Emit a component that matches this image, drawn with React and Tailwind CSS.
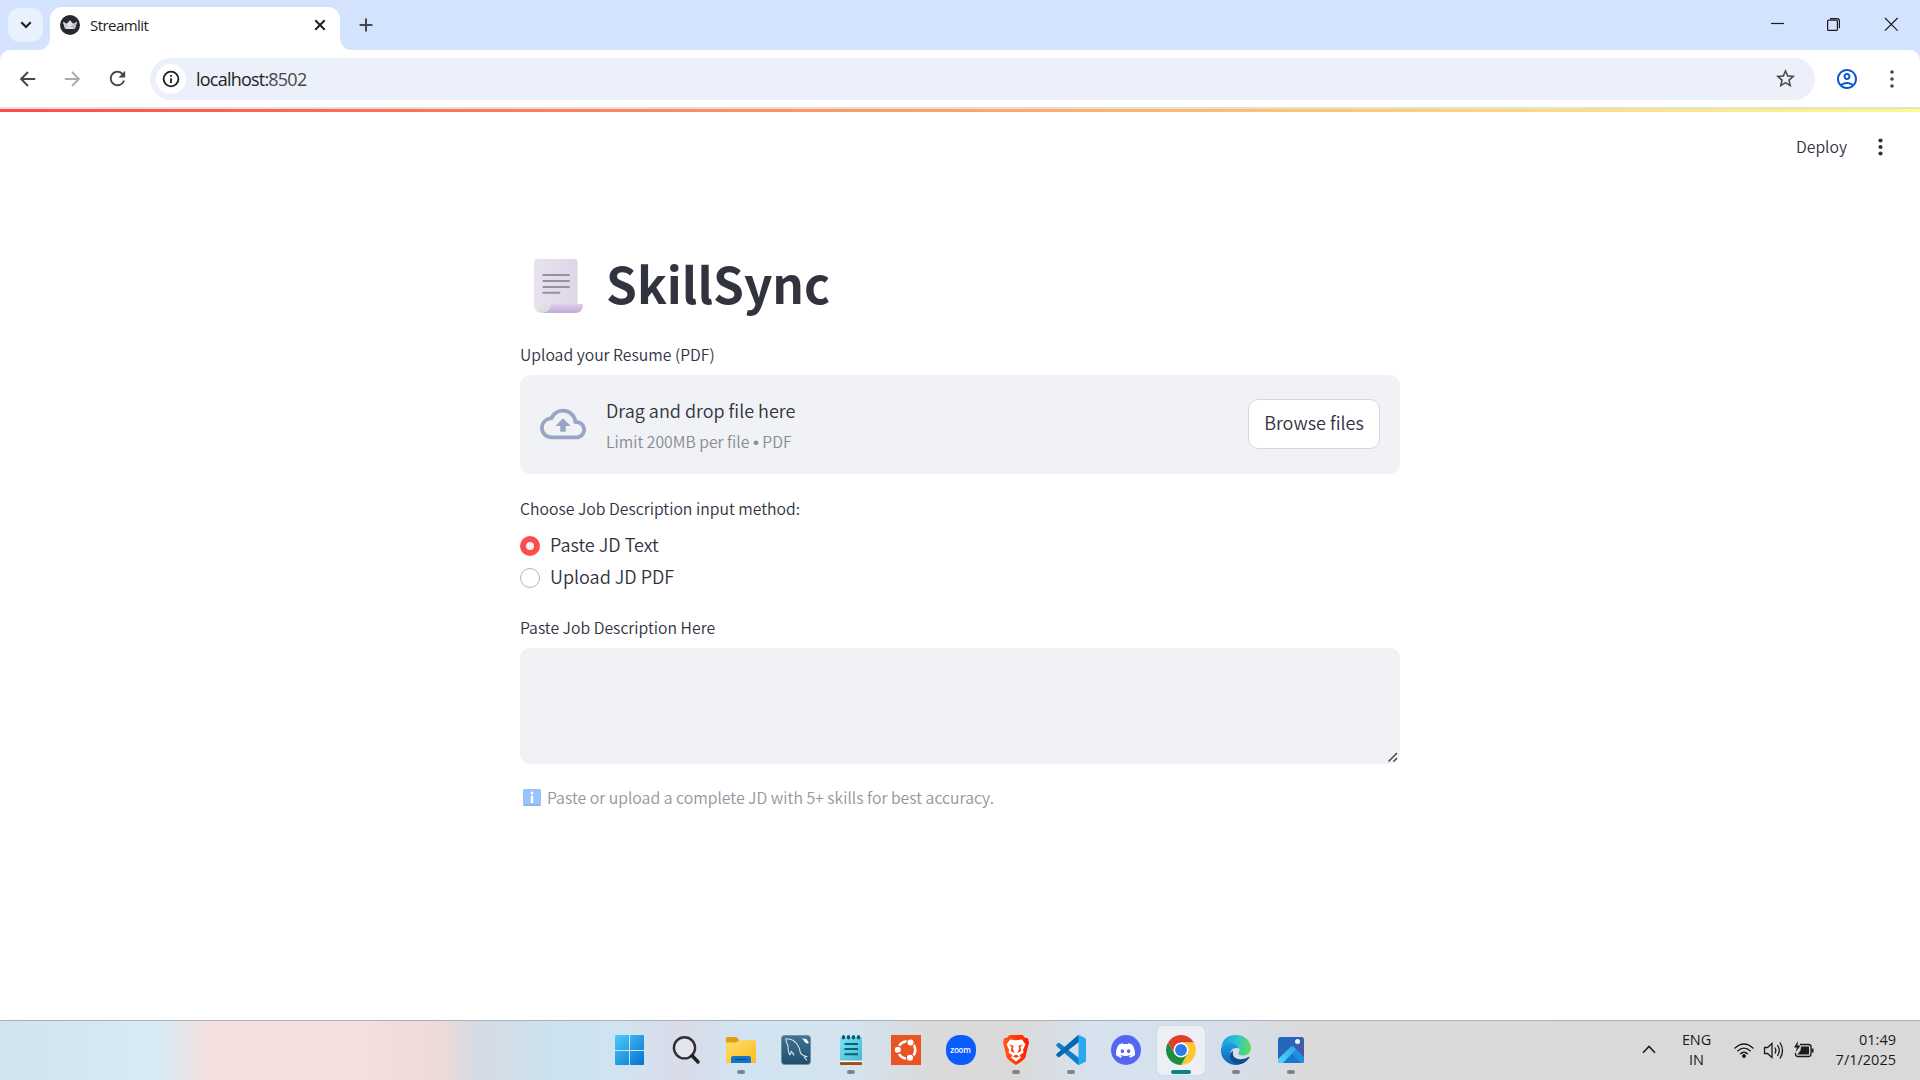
import React from "react";
import { MdOutlineCloudUpload, MdOutlineAccountCircle, MdStarOutline, MdRefresh } from "react-icons/md";
import { SiDiscord } from "react-icons/si";

const SEGOE = "font-['Open_Sans','Noto_Sans',sans-serif]";
const SOURCE = "font-['Noto_Sans_CJK_SC','Noto_Sans',sans-serif]";

function StreamlitFavicon() {
  return (
    <svg width="20" height="20" viewBox="0 0 20 20">
      <circle cx="10" cy="10" r="10" fill="#262730" />
      <path d="M3 6.800 6.800 8.700 10 5.200 13.200 8.700 17 6.800 15 13.400Q10 14.800 5 13.400Z" fill="#e4e4e6" />
      <path d="M3 6.800 10 11.500 6 13.600 5 13.400Z" fill="#cfcfd3" />
      <path d="M17 6.800 10 11.500 14 13.600 15 13.400Z" fill="#bdbdc2" />
    </svg>
  );
}

function TabStrip() {
  return (
    <div className="flex h-[50px] bg-[#d3e3fd]">
      <div className="ml-2 mt-2 flex h-[34px] w-[35px] items-center justify-center rounded-xl bg-[#e9f1fe]">
        <svg width="12" height="8" viewBox="0 0 12 8" fill="none" stroke="#1f1f1f" strokeWidth="2.2">
          <path d="M1.3 1.3 6 6 10.7 1.3" />
        </svg>
      </div>
      <svg className="mt-[38px] ml-[-5px]" width="12" height="12" viewBox="0 0 12 12">
        <path d="M12 0V12H0A12 12 0 0 0 12 0Z" fill="#fff" />
      </svg>
      <div className="mt-[7px] flex h-[43px] w-[290px] items-center rounded-t-xl bg-white pl-[10px] pr-[13px] pb-[7px]">
        <StreamlitFavicon />
        <span className="ml-[10px] flex-1 text-[15px] leading-5 tracking-[-0.55px] text-[#1f1f1f]">Streamlit</span>
        <svg width="14" height="14" viewBox="0 0 14 14" fill="none" stroke="#1f1f1f" strokeWidth="2">
          <path d="M2.3 2.3 11.7 11.7M11.7 2.3 2.3 11.7" />
        </svg>
      </div>
      <svg className="mt-[38px]" width="12" height="12" viewBox="0 0 12 12">
        <path d="M0 0V12H12A12 12 0 0 1 0 0Z" fill="#fff" />
      </svg>
      <svg className="ml-[7px] mt-[18px]" width="14" height="14" viewBox="0 0 14 14" stroke="#474747" strokeWidth="2">
        <path d="M.6 7H13.4M7 .6V13.4" />
      </svg>
      <div className="ml-auto flex pt-[17px]">
        <svg width="150" height="16" viewBox="0 0 150 16" fill="none" stroke="#1b1b1b" strokeWidth="1.2">
          <path d="M1 6.5H14" />
          <path d="M57.6 4.1Q57.6 3.1 58.6 3.1H66.4Q67.4 3.1 67.4 4.1V12.4Q67.4 13.4 66.4 13.4H58.6Q57.6 13.4 57.6 12.4Z" />
          <path d="M60 1.6H67.2Q69.4 1.6 69.4 3.8V11.3" />
          <path d="M115 1 127.6 13.6M127.6 1 115 13.6" />
        </svg>
      </div>
    </div>
  );
}

function Toolbar() {
  return (
    <div className="flex bg-[#d3e3fd]">
      <div className="flex h-[57px] flex-1 items-center rounded-t-[10px] bg-white">
        <svg className="ml-[20px]" width="16" height="16" viewBox="0 0 16 16" fill="none" stroke="#474747" strokeWidth="1.9">
          <path d="M8 1 1.2 8 8 15M1.2 8H15.2" />
        </svg>
        <svg className="ml-[28px]" width="16" height="16" viewBox="0 0 16 16" fill="none" stroke="#ababab" strokeWidth="1.9">
          <path d="M8 1 14.8 8 8 15M14.8 8H.8" />
        </svg>
        <MdRefresh className="ml-[26px]" size="23" color="#474747" />
        <div className="ml-[21px] flex h-[42px] w-[1665px] items-center rounded-full bg-[#ecf0fa] pl-[6px] pr-[18px]">
          <span className="flex h-[30px] w-[30px] items-center justify-center rounded-full bg-white">
            <svg width="18" height="18" viewBox="0 0 18 18" fill="none" stroke="#1f1f1f" strokeWidth="1.8">
              <circle cx="9" cy="9" r="7.4" />
              <path d="M9 8.2V13M9 5V6.7" />
            </svg>
          </span>
          <span className="ml-[10px] flex-1 pt-px text-[18px] leading-6 tracking-[-0.780px] text-[#1f1f1f]">localhost:<span className="text-[#474747]">8502</span></span>
          <MdStarOutline size="23" color="#474747" />
        </div>
        <MdOutlineAccountCircle className="ml-[20px]" size="24" color="#0b57d0" />
        <svg className="ml-[31px]" width="4" height="18" viewBox="0 0 4 18" fill="#474747">
          <circle cx="2" cy="2" r="1.8" />
          <circle cx="2" cy="9" r="1.8" />
          <circle cx="2" cy="16" r="1.8" />
        </svg>
      </div>
    </div>
  );
}

function ScrollEmoji() {
  return (
    <svg className="mt-[7px]" width="50" height="55" viewBox="0 0 50 55">
      <defs>
        <linearGradient id="paper" x1="0" y1="0" x2="1" y2="0">
          <stop offset="0" stopColor="#e9e2f0" />
          <stop offset="1" stopColor="#dcd6e6" />
        </linearGradient>
        <linearGradient id="roll" x1="0" y1="0" x2="0" y2="1">
          <stop offset="0" stopColor="#decfe9" />
          <stop offset="1" stopColor="#c2a9da" />
        </linearGradient>
        <linearGradient id="curl" x1="0" y1="0" x2="1" y2="1">
          <stop offset="0" stopColor="#eceaf0" />
          <stop offset="1" stopColor="#d5d2da" />
        </linearGradient>
      </defs>
      <path d="M0 2Q0 0 2 0H41Q43.500 0 43.500 2V48H0Z" fill="url(#paper)" />
      <path d="M17 45H49Q49 54 41 54H8Q17 52 17 45Z" fill="url(#roll)" />
      <path d="M0 44V46.500Q1 54 8 54 16 53 17 45.500 14 47.500 11 45.500 6 43.500 0 46Z" fill="url(#curl)" />
      <path d="M9.300 16H35M9.300 22H35M9.300 28H35M9.300 33.700H25.500" stroke="#988f9f" strokeWidth="1.900" strokeLinecap="round" />
    </svg>
  );
}

function Radio({ label, checked }) {
  return (
    <div className="flex h-8 items-center">
      {checked ? (
        <span className="flex h-5 w-5 items-center justify-center rounded-full bg-[#ff4b4b]">
          <span className="h-2 w-2 rounded-full bg-[#f0f2f6]" />
        </span>
      ) : (
        <span className="h-5 w-5 rounded-full border border-[#b3b4b8] bg-white" />
      )}
      <span className="mb-[4px] ml-[10px] text-[18.050px] leading-8">{label}</span>
    </div>
  );
}

function Page() {
  return (
    <div className={`h-[908px] bg-white font-[350] text-[#31333f] ${SOURCE}`}>
      <div className="flex h-[70px] items-center justify-end pr-[37px]">
        <span className="text-[15.780px] leading-6">Deploy</span>
        <svg className="ml-[31px]" width="5" height="18" viewBox="0 0 5 18" fill="#31333f">
          <circle cx="2.500" cy="2.500" r="2.100" />
          <circle cx="2.500" cy="9" r="2.100" />
          <circle cx="2.500" cy="15.500" r="2.100" />
        </svg>
      </div>
      <main className="mx-auto w-[880px] pt-[68px]">
        <div className="flex h-[66px] items-center pl-[14px]">
          <ScrollEmoji />
          <h1 className="ml-[22px] text-[49.500px] font-bold leading-[66px]">SkillSync</h1>
        </div>
        <div className="mt-[27px] text-[15.780px] leading-6">Upload your Resume (PDF)</div>
        <div className="mt-[8px] flex h-[99px] items-center rounded-[10px] bg-[#f0f2f6] px-5">
          <MdOutlineCloudUpload className="mb-[2px]" size="46" color="#97a6c3" />
          <div className="ml-[20px] flex-1 pt-[2px]">
            <div className="text-[18.050px] leading-8">Drag and drop file here</div>
            <div className="text-[15.780px] leading-8 text-[#898b93]">
              Limit 200MB per file <span className="font-['Liberation_Sans'] text-[17px] leading-none">•</span> PDF
            </div>
          </div>
          <button className="mb-[2px] h-[50px] w-[132px] rounded-[10px] border border-[#d5d6db] bg-white pb-[3px] text-[18.050px] leading-8">Browse files</button>
        </div>
        <div className="mt-[23px] text-[15.780px] leading-6">Choose Job Description input method:</div>
        <div className="mt-[9px]">
          <Radio label="Paste JD Text" checked />
          <Radio label="Upload JD PDF" />
        </div>
        <div className="mt-[22px] text-[15.780px] leading-6">Paste Job Description Here</div>
        <div className="mt-[8px] flex h-[116px] items-end justify-end rounded-[10px] bg-[#f0f2f6] p-[2px]">
          <svg width="10" height="10" viewBox="0 0 10 10" stroke="#474750" strokeWidth="1.500">
            <path d="M.5 9.500 9 1M5.500 9.500 9 6" />
          </svg>
        </div>
        <div className="mt-[22px] flex items-center pl-[3px] text-[15.810px] leading-6 text-[#94959c]">
          <svg className="mb-px" width="18" height="17" viewBox="0 0 18 17">
            <rect width="18" height="17" rx="1.500" fill="#98c3f8" />
            <rect x=".5" y="15.500" width="17" height="1.500" rx=".7" fill="#8ab0ea" />
            <path d="M9 6.500V14" stroke="#fff" strokeWidth="2.400" />
            <circle cx="9" cy="4" r="1.400" fill="#fff" />
          </svg>
          <span className="ml-[6px]">Paste or upload a complete JD with 5+ skills for best accuracy.</span>
        </div>
      </main>
    </div>
  );
}

function WindowsIcon() {
  return (
    <svg className="mr-[2px]" width="30" height="30" viewBox="0 0 30 30">
      <defs>
        <linearGradient id="win" gradientUnits="userSpaceOnUse" x1="0" y1="0" x2="29" y2="30">
          <stop offset="0" stopColor="#4ccbfb" />
          <stop offset="1" stopColor="#0470ce" />
        </linearGradient>
      </defs>
      <path d="M1 0H14V15H0V1Q0 0 1 0ZM15 0H28Q29 0 29 1V15H15ZM0 16H14V30H1Q0 30 0 29ZM15 16H29V29Q29 30 28 30H15Z" fill="url(#win)" />
    </svg>
  );
}

function SearchIcon() {
  return (
    <svg width="30" height="30" viewBox="0 0 30 30" fill="none">
      <circle cx="13.500" cy="12.800" r="10.600" stroke="#303030" strokeWidth="2.400" fill="#fff" fillOpacity=".25" />
      <path d="M21 20.500 27 27" stroke="#202020" strokeWidth="3.400" strokeLinecap="round" />
    </svg>
  );
}

function FolderIcon() {
  return (
    <svg width="30" height="30" viewBox="0 0 30 30">
      <defs>
        <linearGradient id="fold" x1="0" y1="0" x2="1" y2="1">
          <stop offset="0" stopColor="#ffdc6a" />
          <stop offset="1" stopColor="#fbbd1f" />
        </linearGradient>
      </defs>
      <path d="M0 3Q0 2 1 2H10Q11 2 12 3.500L14 6V12H0Z" fill="#dea00d" />
      <path d="M0 7.500H10L13 5.300H29Q30 5.300 30 6.300V28H0Z" fill="url(#fold)" />
      <path d="M5 28V23Q5 21 7 21H23Q25 21 25 23V28Z" fill="#1576c8" />
      <path d="M9 24.500H21.500" stroke="#0b4a88" strokeWidth="1.200" />
    </svg>
  );
}

function WorkbenchIcon() {
  return (
    <svg width="30" height="30" viewBox="0 0 30 30">
      <defs>
        <linearGradient id="wb" x1="0" y1="0" x2="0" y2="1">
          <stop offset="0" stopColor="#3f7295" />
          <stop offset="1" stopColor="#1f4f6d" />
        </linearGradient>
      </defs>
      <rect x=".5" y=".5" width="29" height="29" rx="3" fill="url(#wb)" stroke="#6e93a8" />
      <path d="M5 5Q4 3.500 6 3.800 12 4 16 9 19 13 19.500 18 21 20.500 25.500 21.500L23.500 22.500 26 25.500M5 5Q5.500 8 7 10.500 6.500 15 8.500 19.500 9.500 20 10.200 16.500 13 19 12.700 20.500" fill="none" stroke="#dbe7ee" strokeWidth="1.100" />
      <path d="M20.500 2.500 23 4 25 3.500 28 8 25.500 8.500 23.500 6.500Z" fill="#fff" />
    </svg>
  );
}

function NotepadIcon() {
  return (
    <svg width="30" height="30" viewBox="0 0 30 30">
      <defs>
        <linearGradient id="np" x1="0" y1="0" x2="1" y2="1">
          <stop offset="0" stopColor="#7fe3f3" />
          <stop offset="1" stopColor="#42b8d3" />
        </linearGradient>
      </defs>
      <rect x="4" y="26.500" width="22" height="3.500" rx="1" fill="#a04f14" />
      <rect x="4" y="25.300" width="22" height="1.800" fill="#fff" />
      <path d="M4 3.500Q4 2 5.500 2H24.500Q26 2 26 3.500V25.500H4Z" fill="url(#np)" />
      <path d="M8.500 9H22M8.500 14H22M8.500 19.200H22" stroke="#0a6076" strokeWidth="1.900" />
      <g fill="#0d5c75">
        <ellipse cx="7.500" cy="2.200" rx="1.700" ry="2.200" />
        <ellipse cx="12.500" cy="2.200" rx="1.700" ry="2.200" />
        <ellipse cx="17.500" cy="2.200" rx="1.700" ry="2.200" />
        <ellipse cx="22.500" cy="2.200" rx="1.700" ry="2.200" />
      </g>
    </svg>
  );
}

function UbuntuIcon() {
  return (
    <svg width="30" height="30" viewBox="0 0 30 30">
      <rect width="30" height="30" fill="#e95420" />
      <circle cx="15.700" cy="15" r="8.600" fill="none" stroke="#fff" strokeWidth="2.600" />
      <g fill="#fff" stroke="#e95420" strokeWidth="1.300">
        <circle cx="6.800" cy="14.800" r="3.700" />
        <circle cx="19.500" cy="7.500" r="3.700" />
        <circle cx="19" cy="22.800" r="3.700" />
      </g>
    </svg>
  );
}

function ZoomIcon() {
  return (
    <span className="flex h-[30px] w-[30px] items-center justify-center rounded-[14px] bg-[#0b5cff] pb-px text-[8px] font-semibold leading-none tracking-[-0.200px] text-white">
      zoom
    </span>
  );
}

function BraveIcon() {
  return (
    <svg width="30" height="30" viewBox="0 0 30 30">
      <defs>
        <linearGradient id="brv" x1="0" y1="0" x2="1" y2="0">
          <stop offset="0" stopColor="#ff5a14" />
          <stop offset="1" stopColor="#fb1c08" />
        </linearGradient>
      </defs>
      <path d="M8.500 0H21.500L24 2.800 27 3.300 28 8 27.300 10 24.500 22Q23.500 25 15 30 6.500 25 5.500 22L2.700 10 2 8 3 3.300 6 2.800Z" fill="url(#brv)" />
      <path d="M9 4.500 15 5.300 21 4.500 24.500 9.500 22 14.500 22.500 17.500 18.500 20.500 20 22.500 15 26.500 10 22.500 11.500 20.500 7.500 17.500 8 14.500 5.500 9.500Z" fill="#fff" />
      <path d="M8.500 9.500 12.500 10.700 11.800 14 13.800 18 10.500 16.500 9.800 15 10.800 12.500ZM21.500 9.500 17.500 10.700 18.200 14 16.200 18 19.500 16.500 20.200 15 19.200 12.500ZM11.500 21.300 15 19.700 18.500 21.300 15 22.800Z" fill="#fb3a0e" />
    </svg>
  );
}

function VsCodeIcon() {
  return (
    <svg width="30" height="30" viewBox="0 0 30 30">
      <path d="M.4 9.500 2 8Q2.800 7.500 3.500 8L23 23V30L21.500 29.500.4 11Q0 10.300.4 9.500Z" fill="#0f7fcb" />
      <path d="M.4 20.500 2 22Q2.800 22.500 3.500 22L23 7V0L21.500 .5 .4 19Q0 19.700.4 20.500Z" fill="#0669ad" />
      <path d="M21.500 .3 23 0 29 2.900Q30 3.500 30 4.500V25.500Q30 26.500 29 27.100L23 30 21.500 29.600Q22.500 29.300 22.500 28V2Q22.500.8 21.500 .3Z" fill="#2aa8f0" />
    </svg>
  );
}

function DiscordIcon() {
  return (
    <span className="flex h-[30px] w-[30px] items-center justify-center rounded-full bg-[#5865f2]">
      <SiDiscord size="19" color="#fff" />
    </span>
  );
}

function ChromeIcon() {
  return (
    <svg width="30" height="30" viewBox="0 0 48 48">
      <path d="M24 12H44.780A24 24 0 0 0 3.220 12L13.610 30Z" fill="#e33b2e" />
      <path d="M34.390 30 24 48A24 24 0 0 0 44.780 12H24Z" fill="#fcc934" />
      <path d="M13.610 30 3.220 12A24 24 0 0 0 24 48L34.390 30Z" fill="#1e8e3e" />
      <circle cx="24" cy="24" r="12" fill="#fff" />
      <circle cx="24" cy="24" r="9.500" fill="#2a7bea" />
    </svg>
  );
}

function EdgeIcon() {
  return (
    <svg width="30" height="30" viewBox="0 0 30 30">
      <defs>
        <linearGradient id="edgeTop" x1="0" y1=".4" x2="1" y2=".5">
          <stop offset="0" stopColor="#1b9de2" />
          <stop offset=".5" stopColor="#2fc2d0" />
          <stop offset="1" stopColor="#62e052" />
        </linearGradient>
        <linearGradient id="edgeLeft" x1="0" y1="0" x2="0" y2="1">
          <stop offset="0" stopColor="#1ba0e6" />
          <stop offset="1" stopColor="#1160ae" />
        </linearGradient>
      </defs>
      <path d="M.2 13Q2 0 15 0C24 0 30 6.500 30 13 30 18 26 20.500 22 20.500 18.500 20.500 17 19 17.500 18 19 16 18.500 14 17.500 12.500 13 6 3 7.500.2 13Z" fill="url(#edgeTop)" />
      <path d="M.1 13.500C2.500 8 9 6.500 13.500 9 16.500 10.700 17.500 12.500 17.800 13.500 10 11 7.500 19 11 24 13.500 28 17.500 29.500 19.500 29.300 9 32.500-1.500 24 .1 13.500Z" fill="url(#edgeLeft)" />
      <path d="M12.200 15.500C10 24 19 26.500 27.500 22 28.300 21.600 28.800 22.200 28.200 23 24 29 18 30.500 14 28.300 7.500 25 7.500 18.500 12.200 15.500Z" fill="#0d4f90" />
    </svg>
  );
}

function PhotosIcon() {
  return (
    <svg width="30" height="30" viewBox="0 0 30 30">
      <defs>
        <linearGradient id="phBg" x1="0" y1="0" x2="1" y2="1">
          <stop offset="0" stopColor="#136fc4" />
          <stop offset=".5" stopColor="#3461b2" />
          <stop offset="1" stopColor="#5b4aa0" />
        </linearGradient>
        <linearGradient id="phHill" x1="0" y1="1" x2="1" y2="0">
          <stop offset="0" stopColor="#55dcfa" />
          <stop offset="1" stopColor="#2ba7e8" />
        </linearGradient>
        <clipPath id="phClip"><rect x="2" y="2" width="26" height="26" rx="2.500" /></clipPath>
      </defs>
      <g clipPath="url(#phClip)">
        <rect x="2" y="2" width="26" height="26" fill="url(#phBg)" />
        <path d="M4 28 16 15 29 28Z" fill="#1877cf" />
        <path d="M15 12Q16.500 10.500 18 12L30 24V30H27L14 17Z" fill="#1e8fdc" />
        <path d="M0 26 14.500 12Q16.500 10.300 18.500 12.500L20 14.500 6 29H0Z" fill="url(#phHill)" />
      </g>
      <circle cx="21.500" cy="6.500" r="2.500" fill="#eef3fb" />
    </svg>
  );
}

const apps = [
  { name: "start", Icon: WindowsIcon },
  { name: "search", Icon: SearchIcon },
  { name: "explorer", Icon: FolderIcon, open: true },
  { name: "workbench", Icon: WorkbenchIcon },
  { name: "notepad", Icon: NotepadIcon, open: true },
  { name: "ubuntu", Icon: UbuntuIcon },
  { name: "zoom", Icon: ZoomIcon },
  { name: "brave", Icon: BraveIcon, open: true },
  { name: "vscode", Icon: VsCodeIcon, open: true },
  { name: "discord", Icon: DiscordIcon },
  { name: "chrome", Icon: ChromeIcon, active: true },
  { name: "edge", Icon: EdgeIcon, open: true },
  { name: "photos", Icon: PhotosIcon, open: true },
];

function Taskbar() {
  return (
    <div className="flex h-[60px] justify-between border-t border-[#acb0b5] bg-[linear-gradient(90deg,#cfe4ef_0px,#d3e8f1_90px,#daebf4_162px,#e5e4e8_182px,#f4e1e0_210px,#f3dfde_370px,#ecdad8_445px,#d5dbe4_475px,#cbe3f0_560px,#d2e3f0_630px,#dadbe8_680px,#d2e4f1_735px,#d3e4f0_850px,#dadada_930px,#dadada_1020px,#d6e2ee_1090px,#d6e1ee_1180px,#d8dde4_1270px,#dadada_1310px,#d9d9d9_1920px)]">
      <div className="flex pl-[603px]">
        {apps.map(({ name, Icon, open, active }) => (
          <div key={name} className="flex w-[55px] justify-center pt-[5px]">
            <div className={active ? "flex h-[49px] w-[48px] flex-col items-center rounded-[5px] bg-[#eceff4] pt-[9px] shadow-[0_0_1px_#9aa]" : "flex h-[49px] w-[48px] flex-col items-center pt-[9px]"}>
              <Icon />
              {open && <span className="mt-[5px] h-1 w-2 rounded-full bg-[#7f8387]" />}
              {active && <span className="mt-[5px] h-1 w-5 rounded-full bg-[#0b8488]" />}
            </div>
          </div>
        ))}
      </div>
      <div className="flex items-center pb-[2px] pr-[24px] text-[14.500px] leading-5 text-[#1b1b1b]">
        <svg width="14" height="9" viewBox="0 0 14 9" fill="none" stroke="#1b1b1b" strokeWidth="1.600">
          <path d="M1 7.800 7 1.500 13 7.800" />
        </svg>
        <div className="ml-[25px] w-[31px] pt-px text-center tracking-[-0.100px]">ENG<br />IN</div>
        <svg className="ml-[21px]" width="82" height="22" viewBox="0 0 82 22" fill="none" stroke="#1b1b1b" strokeWidth="1.300">
          <path d="M1.500 9.500Q11 .5 20.500 9.500M4.300 12.300Q11 6 17.700 12.300M7 15Q11 11.500 15 15" />
          <circle cx="11" cy="17" r="1.300" fill="#1b1b1b" />
          <path d="M31.500 8.500H34.500L39 4.500V18.500L34.500 14.500H31.500ZM41.800 8.500Q43.800 11.500 41.800 14.500M44.500 6Q48 11.500 44.500 17M47 3.500Q52 11.500 47 19.500" />
          <path d="M67 5.500H75.500Q78 5.500 78 8V15Q78 17.500 75.500 17.500H65Q62.500 17.500 62.500 15V14" />
          <path d="M68 7.500H76V15.500H64.500L67.500 11.500Z" fill="#1b1b1b" stroke="none" />
          <path d="M65 2 61 8.500H64L62.500 13.500 67.500 6.500H64.500Z" fill="#1b1b1b" stroke="none" />
          <path d="M79.500 9.500V13.500" strokeWidth="2" />
        </svg>
        <div className="ml-[17px] w-[64px] whitespace-nowrap text-right">01:49<br />7/1/2025</div>
      </div>
    </div>
  );
}

export default function App() {
  return (
    <div className={`flex h-[1080px] w-[1920px] flex-col overflow-hidden bg-white ${SEGOE}`}>
      <TabStrip />
      <Toolbar />
      <div className="h-[2px] bg-[#dfe0e2]" />
      <div className="h-[3px] bg-[linear-gradient(90deg,#ff4b4b,#fffd80)]" />
      <Page />
      <Taskbar />
    </div>
  );
}
